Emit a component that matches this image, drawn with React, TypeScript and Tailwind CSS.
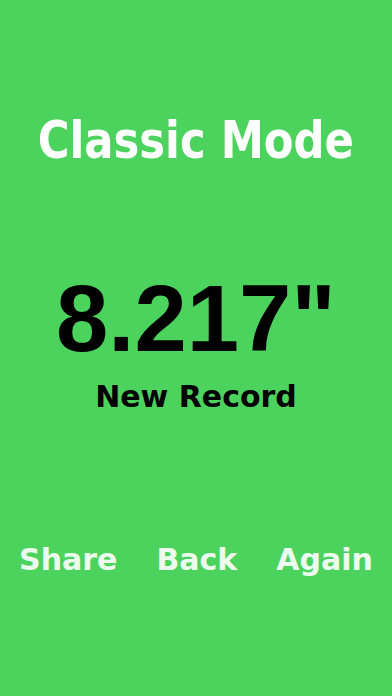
export default function App() {
  return (
    <div className="flex h-[696px] w-full flex-col items-center bg-[#4cd35e] pt-[114px]">
      <h1 className="origin-center scale-x-[0.926] font-['DejaVu_Sans',Verdana,sans-serif] font-stretch-condensed text-[52px] font-bold leading-none whitespace-nowrap text-white">
        Classic Mode
      </h1>
      <div className="mt-[106px] font-['Liberation_Sans',Arial,sans-serif] text-[94px] font-bold leading-none text-black">
        8.217"
      </div>
      <div className="mt-[16px] font-['DejaVu_Sans',Verdana,sans-serif] text-[30px] font-bold leading-none text-black">
        New Record
      </div>
      <div className="mt-[133px] flex justify-center gap-[39px] font-['DejaVu_Sans',Verdana,sans-serif] text-[30px] font-bold leading-none text-white/90">
        <button type="button">Share</button>
        <button type="button">Back</button>
        <button type="button">Again</button>
      </div>
    </div>
  );
}
